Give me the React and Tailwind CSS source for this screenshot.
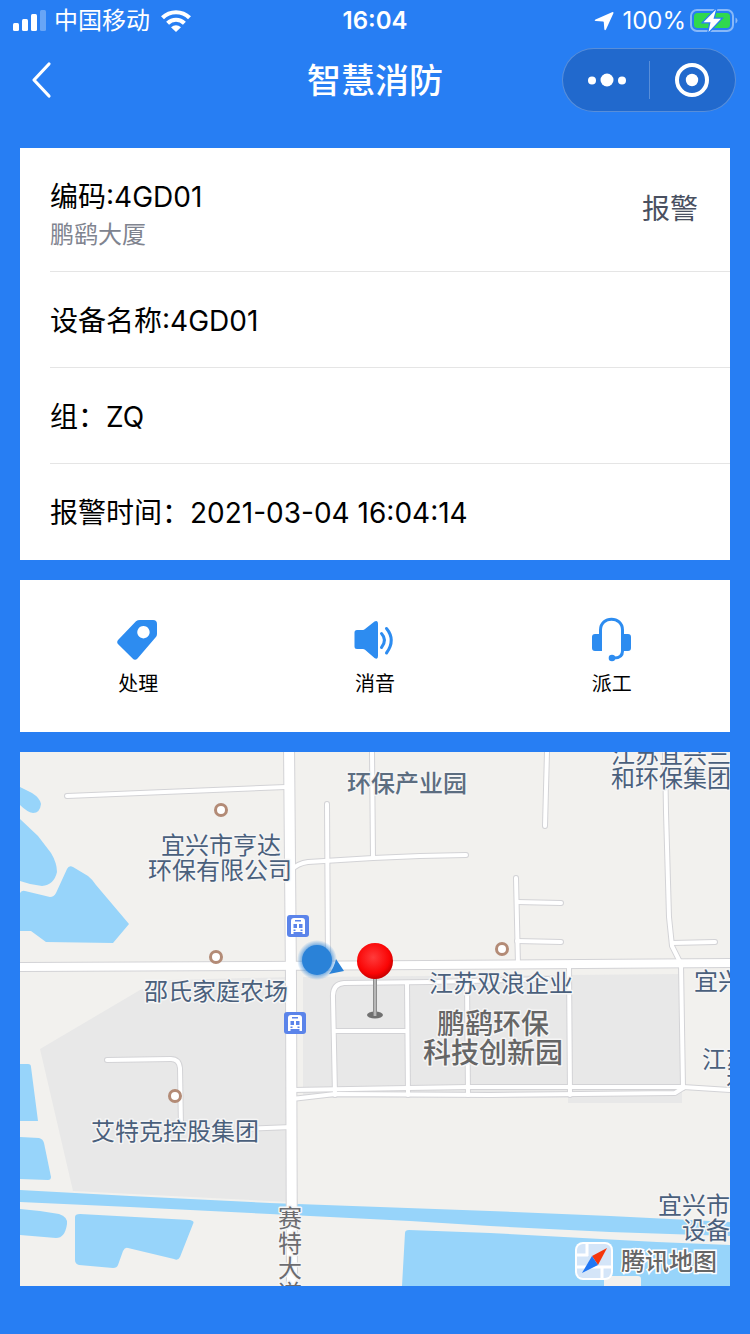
import React from 'react';

const details = [
  { label: '设备名称:', value: '4GD01' },
  { label: '组：', value: 'ZQ' },
  { label: '报警时间：', value: '2021-03-04 16:04:14' },
];

const water = [
  'M0 35L12 41Q20 46 21 52Q20 61 13 61Q7 60 0 53Z',
  'M0 67L18 84L31 101Q37 111 37 120Q34 133 22 134Q11 133 0 129Z',
  'M0 141Q2 138 5 139L30 145Q34 145 36 141L47 117Q49 113 53 115L68 124Q73 128 76 133L109 172L93 191L26 190L11 179H0Z',
  'M0 312H8Q11 312 11 315L18 369H0Z',
  'M0 385L19 386Q23 387 24 391L31 425Q31 428 28 428L0 427Z',
  'M0 438L110 444L250 451L470 459L590 464L710 470V484L590 480L470 474L390 469L250 462L110 455L0 450Z',
  'M0 457L20 459L39 462Q48 465 47 472Q45 486 36 486L0 483Z',
  'M55 465Q55 462 60 462L170 468Q175 469 173 472L160 505Q158 509 154 507L108 496Q105 495 103 499L98 513Q97 516 93 516L59 513Q55 512 55 508Z',
  'M385 481Q385 478 389 478L470 481L637 490L710 493V534H382Z',
];

const thinRoads = [
  'M47 44L266 35',
  'M307 52L308 213',
  'M352 0L353 106',
  'M270 119Q278 111 288 110L353 106L400 104L446 103',
  'M527 0L525 74',
  'M496 126L498 213',
  'M497 150L541 151',
  'M497 189L541 190',
  'M645 0L646 60L649 165L652 194L661 212',
  'M652 191L695 190',
  'M661 212L663 336',
  'M549 214L550 343',
  'M315 343L313 246Q312 232 324 231L410 230L528 227',
  'M314 279L387 279',
  'M387 231L388 343',
  'M447 229L448 343',
  'M272 338L388 336L448 335L663 335L710 338',
  'M272 347L315 342L470 343L655 341L663 336',
  'M87 308L151 307Q159 307 160 316L161 376',
  'M225 377L272 375',
];

const mainRoads = [
  { d: 'M-8 215L240 214L710 211H720', width: 8 },
  { d: 'M269 -8L271 230L272 545', width: 10 },
];

const places = [
  [201, 58],
  [196, 205],
  [482, 197],
  [155, 344],
];

const labels = [
  { text: '宜兴市亨达', x: 201, y: 102 },
  { text: '环保有限公司', x: 200, y: 127 },
  { text: '邵氏家庭农场', x: 196, y: 248 },
  { text: '江苏双浪企业', x: 481, y: 240 },
  { text: '艾特克控股集团', x: 155, y: 388 },
  { text: '江苏宜兴三', x: 651, y: 11 },
  { text: '和环保集团', x: 651, y: 35 },
  { text: '宜兴', x: 698, y: 238 },
  { text: '江苏', x: 706, y: 316 },
  { text: '有', x: 718, y: 340 },
  { text: '宜兴市', x: 674, y: 462 },
  { text: '设备', x: 686, y: 487 },
];

function StatusBar() {
  return (
    <div className="grid h-10 grid-cols-3 items-center px-3 pt-0.5 text-2xl">
      <div className="flex items-center gap-2">
        <svg className="h-6 w-[34px]" viewBox="0 0 34 24" fill="currentColor">
          <rect x="1" y="14" width="6" height="8" rx="1.5" />
          <rect x="10" y="10" width="6" height="12" rx="1.5" />
          <rect x="19" y="5" width="6" height="17" rx="1.5" />
          <rect x="28" y="1" width="6" height="21" rx="1.5" opacity="0.3" />
        </svg>
        <span>中国移动</span>
        <svg className="ml-0.5 h-6 w-8" viewBox="0 0 32 24" fill="none" stroke="currentColor" strokeWidth="4.2">
          <path d="M2.5 8.8C10 1.4 22 1.4 29.5 8.8" />
          <path d="M7.6 14.2C12.4 9.6 19.6 9.6 24.4 14.2" />
          <path d="M11 18.3Q16 14 21 18.3L16 23Z" fill="currentColor" stroke="none" />
        </svg>
      </div>
      <span className="text-center font-semibold">16:04</span>
      <div className="flex items-center justify-end gap-2">
        <svg className="h-5 w-5" viewBox="0 0 20 20" fill="currentColor">
          <path d="M18 1.200Q20 .5 19.300 2.500L12 18.500Q10.800 20.300 10.300 18L9.800 11.200Q9.800 10.400 9 10.400L1.800 10Q-.3 9.500 1.500 8.500Z" />
        </svg>
        <span>100%</span>
        <svg className="-ml-1 h-6 w-12" viewBox="0 0 48 24" fill="none">
          <rect x="1" y="1" width="42" height="21" rx="6" stroke="#fff" strokeOpacity="0.45" strokeWidth="2" />
          <rect x="4" y="4" width="36" height="15" rx="3.5" fill="#30d84e" />
          <path d="M45.500 8.500Q47.500 9.500 47.500 11.500Q47.500 13.500 45.500 14.500Z" fill="#fff" fillOpacity="0.45" />
          <path d="M26 .5L13.500 13.200H20.500L18.500 23L31 9.800H23.500Z" fill="#fff" stroke="#277ef3" strokeWidth="2.500" paintOrder="stroke" />
        </svg>
      </div>
    </div>
  );
}

function NavBar() {
  return (
    <header className="grid h-20 grid-cols-3 items-center px-3.5">
      <button type="button" aria-label="返回" className="flex h-16 w-14 items-center justify-center">
        <svg className="h-10 w-6" viewBox="0 0 24 40" fill="none" stroke="#fff" strokeWidth="3.2" strokeLinecap="round" strokeLinejoin="round">
          <path d="M19 4L4 20L19 36" />
        </svg>
      </button>
      <h1 className="pt-0.5 text-center text-[34px] leading-10 font-medium">智慧消防</h1>
      <div className="flex h-16 w-[174px] items-center justify-self-end rounded-full border border-white/25 bg-[#2169cd]">
        <button type="button" aria-label="更多" className="flex h-full flex-1 items-center justify-center">
          <svg className="h-4 w-10" viewBox="0 0 40 16" fill="#fff">
            <circle cx="6" cy="8.500" r="4" />
            <circle cx="21" cy="8" r="6.500" />
            <circle cx="36" cy="8.500" r="4" />
          </svg>
        </button>
        <span className="h-[38px] w-px bg-white/25" />
        <button type="button" aria-label="关闭" className="flex h-full flex-1 items-center justify-center">
          <svg className="h-9 w-9" viewBox="0 0 36 36">
            <circle cx="18" cy="18" r="15" fill="none" stroke="#fff" strokeWidth="4" />
            <circle cx="18" cy="18" r="6.200" fill="#fff" />
          </svg>
        </button>
      </div>
    </header>
  );
}

function TagIcon() {
  return (
    <svg className="h-12 w-12" viewBox="0 0 48 48" fill="#2d8cf0" fillRule="evenodd">
      <path d="M22 5.200Q23.500 4 26 4H39Q43 4 43 8V18Q43 20 41.500 21.500L23.500 42.600Q21 45 18.600 42.600L4.200 28.300Q2 26 4.500 23.500ZM29.400 10A6.200 6.200 0 1 0 29.500 10Z" />
    </svg>
  );
}

function SoundIcon() {
  return (
    <svg className="h-12 w-12" viewBox="0 0 48 48" fill="#2d8cf0">
      <path d="M6 14H12Q13 14 14 13L23.500 5.500Q27 4 27 8V40Q27 44 23.500 42L14 33.800Q13 33 12 33H6Q3.500 33 3.500 30.500V16.500Q3.500 14 6 14Z" />
      <path d="M30.500 17.500Q36.500 24 30.500 31.500M35.500 12.500Q45 24 35.500 37" fill="none" stroke="#2d8cf0" strokeWidth="3" strokeLinecap="round" />
    </svg>
  );
}

function HeadsetIcon() {
  return (
    <svg className="h-12 w-12" viewBox="0 0 48 48" fill="#2d8cf0">
      <path d="M12.500 34V14C12.500 -.5 34.500 -.5 34.500 14V35Q34.500 42 26 42" fill="none" stroke="#2d8cf0" strokeWidth="3" />
      <path d="M14 18V35H7Q4 35 4 32V21Q4 18 7 18ZM33 18H40Q43 18 43 21V32Q43 35 40 35H33Z" />
      <circle cx="24" cy="42" r="3.300" />
    </svg>
  );
}

const actions = [
  { label: '处理', Icon: TagIcon },
  { label: '消音', Icon: SoundIcon },
  { label: '派工', Icon: HeadsetIcon },
];

function BusStop({ x, y }) {
  return (
    <g transform={`translate(${x} ${y})`}>
      <rect width="22" height="22" rx="3" fill="#5b84ea" />
      <path d="M4 19V6Q4 3 7 3H15Q18 3 18 6V19H15.500V17H6.500V19Z" fill="#fff" />
      <path d="M8 5H14V6.500H8ZM6.500 9H10V13H6.500ZM12 9H15.500V13H12ZM6.500 14.500H8.500V16H6.500ZM13.500 14.500H15.500V16H13.500Z" fill="#5b84ea" />
    </g>
  );
}

function AlarmMap() {
  return (
    <svg
      role="img"
      aria-label="报警位置地图"
      className="block w-full bg-[#f2f1ee]"
      viewBox="0 0 710 534"
      fontSize="24"
      textAnchor="middle"
    >
      <defs>
        <radialGradient id="pin" cx="0.45" cy="0.4" r="0.6">
          <stop offset="0" stopColor="#ff3b3b" />
          <stop offset="0.75" stopColor="#fa0505" />
          <stop offset="1" stopColor="#c80000" />
        </radialGradient>
        <radialGradient id="glow">
          <stop offset="0.7" stopColor="#2a82d8" stopOpacity="0.7" />
          <stop offset="1" stopColor="#2a82d8" stopOpacity="0" />
        </radialGradient>
        <linearGradient id="stem">
          <stop offset="0" stopColor="#777" />
          <stop offset="0.5" stopColor="#ccc" />
          <stop offset="1" stopColor="#777" />
        </linearGradient>
      </defs>

      {/* built-up areas */}
      <path d="M20 297L120 238L150 228L270 225V450L53 439Z" fill="#e8e8e8" />
      <path d="M283 225L662 222V351H548V346H283Z" fill="#e8e8e8" />

      {water.map((d) => (
        <path key={d} d={d} fill="#97d4fa" />
      ))}
      <path d="M584 534V527Q584 524 587 524H618Q621 524 621 527V534Z" fill="#f2f1ee" />

      {/* road casings first, fills on top so that crossings stay open */}
      <g fill="none" strokeLinecap="round" strokeLinejoin="round">
        <g stroke="#d3d3d6">
          {thinRoads.map((d) => (
            <path key={d} d={d} strokeWidth="6" />
          ))}
          {mainRoads.map((r) => (
            <path key={r.d} d={r.d} strokeWidth={r.width + 2} />
          ))}
        </g>
        <g stroke="#fff">
          {thinRoads.map((d) => (
            <path key={d} d={d} strokeWidth="4" />
          ))}
          {mainRoads.map((r) => (
            <path key={r.d} d={r.d} strokeWidth={r.width} />
          ))}
        </g>
      </g>

      {places.map(([x, y]) => (
        <circle key={`${x}-${y}`} cx={x} cy={y} r="5.500" fill="#fff" stroke="#b38b76" strokeWidth="3" />
      ))}
      <BusStop x={267} y={163} />
      <BusStop x={264} y={260} />

      <g stroke="#f5f5f5" strokeWidth="3" strokeLinejoin="round" paintOrder="stroke">
        <g fill="#4a607c">
          {labels.map((l) => (
            <text key={l.text} x={l.x} y={l.y}>
              {l.text}
            </text>
          ))}
        </g>
        <text x="387" y="40" fill="#5c6d80" fontWeight="500">
          环保产业园
        </text>
        <g fill="#666" fontSize="28" fontWeight="500">
          <text x="473" y="282">鹏鹞环保</text>
          <text x="473" y="311">科技创新园</text>
        </g>
        <g fill="#6c6c70">
          {['赛', '特', '大', '道'].map((c, i) => (
            <text key={c} x="270" y={475 + i * 25}>
              {c}
            </text>
          ))}
        </g>
      </g>

      {/* current position */}
      <circle cx="297" cy="208" r="20" fill="url(#glow)" />
      <circle cx="297" cy="208" r="15" fill="#2a82d8" />
      <path d="M316 207L324 219L309 222Q314 216 316 207Z" fill="#2a82d8" />

      {/* alarm pin */}
      <ellipse cx="355" cy="263" rx="8" ry="3.500" fill="#707070" />
      <rect x="353" y="225" width="4" height="39" fill="url(#stem)" />
      <circle cx="355" cy="209" r="18" fill="url(#pin)" />

      {/* map provider */}
      <rect x="555" y="490" width="38" height="38" rx="8" fill="#fff" />
      <rect x="557" y="492" width="34" height="34" rx="6" fill="#d4e5f8" />
      <path d="M567 492V504M556 503H568M582 514V526M556 515H591" stroke="#fff" strokeWidth="3" />
      <path d="M587 496L578 513L572 504Z" fill="#f5360c" />
      <path d="M562 521L572 504L578 513Z" fill="#2077f4" />
      <text x="649" y="518" fill="#666" fontWeight="500" stroke="#fff" strokeWidth="3" paintOrder="stroke">
        腾讯地图
      </text>
    </svg>
  );
}

export default function App() {
  return (
    <div className="min-h-screen bg-[#277ef3] pb-12 font-['Inter','Noto_Sans_CJK_SC',sans-serif] text-white">
      <StatusBar />
      <NavBar />

      <main className="flex flex-col gap-5 px-5 pt-7">
        <section className="bg-white pl-[30px] text-[28px] leading-10 text-black">
          <div className="flex items-start justify-between border-b border-[#e5e5e5] pt-[29px] pr-8 pb-[18px]">
            <div>
              <h2>编码:4GD01</h2>
              <p className="text-2xl leading-9 text-[#80848f]">鹏鹞大厦</p>
            </div>
            <span className="mt-3 text-[#495060]">报警</span>
          </div>
          {details.map((d) => (
            <div key={d.label} className="flex min-h-24 items-center border-b border-[#e5e5e5] pt-0.5 last:border-b-0">
              <p>
                {d.label}
                {d.value}
              </p>
            </div>
          ))}
        </section>

        <section className="grid grid-cols-3 bg-white pt-9 pb-[34px] text-black">
          {actions.map(({ label, Icon }) => (
            <button key={label} type="button" className="flex flex-col items-center gap-1.5">
              <Icon />
              <span className="text-xl leading-7">{label}</span>
            </button>
          ))}
        </section>

        <section>
          <AlarmMap />
        </section>
      </main>
    </div>
  );
}
